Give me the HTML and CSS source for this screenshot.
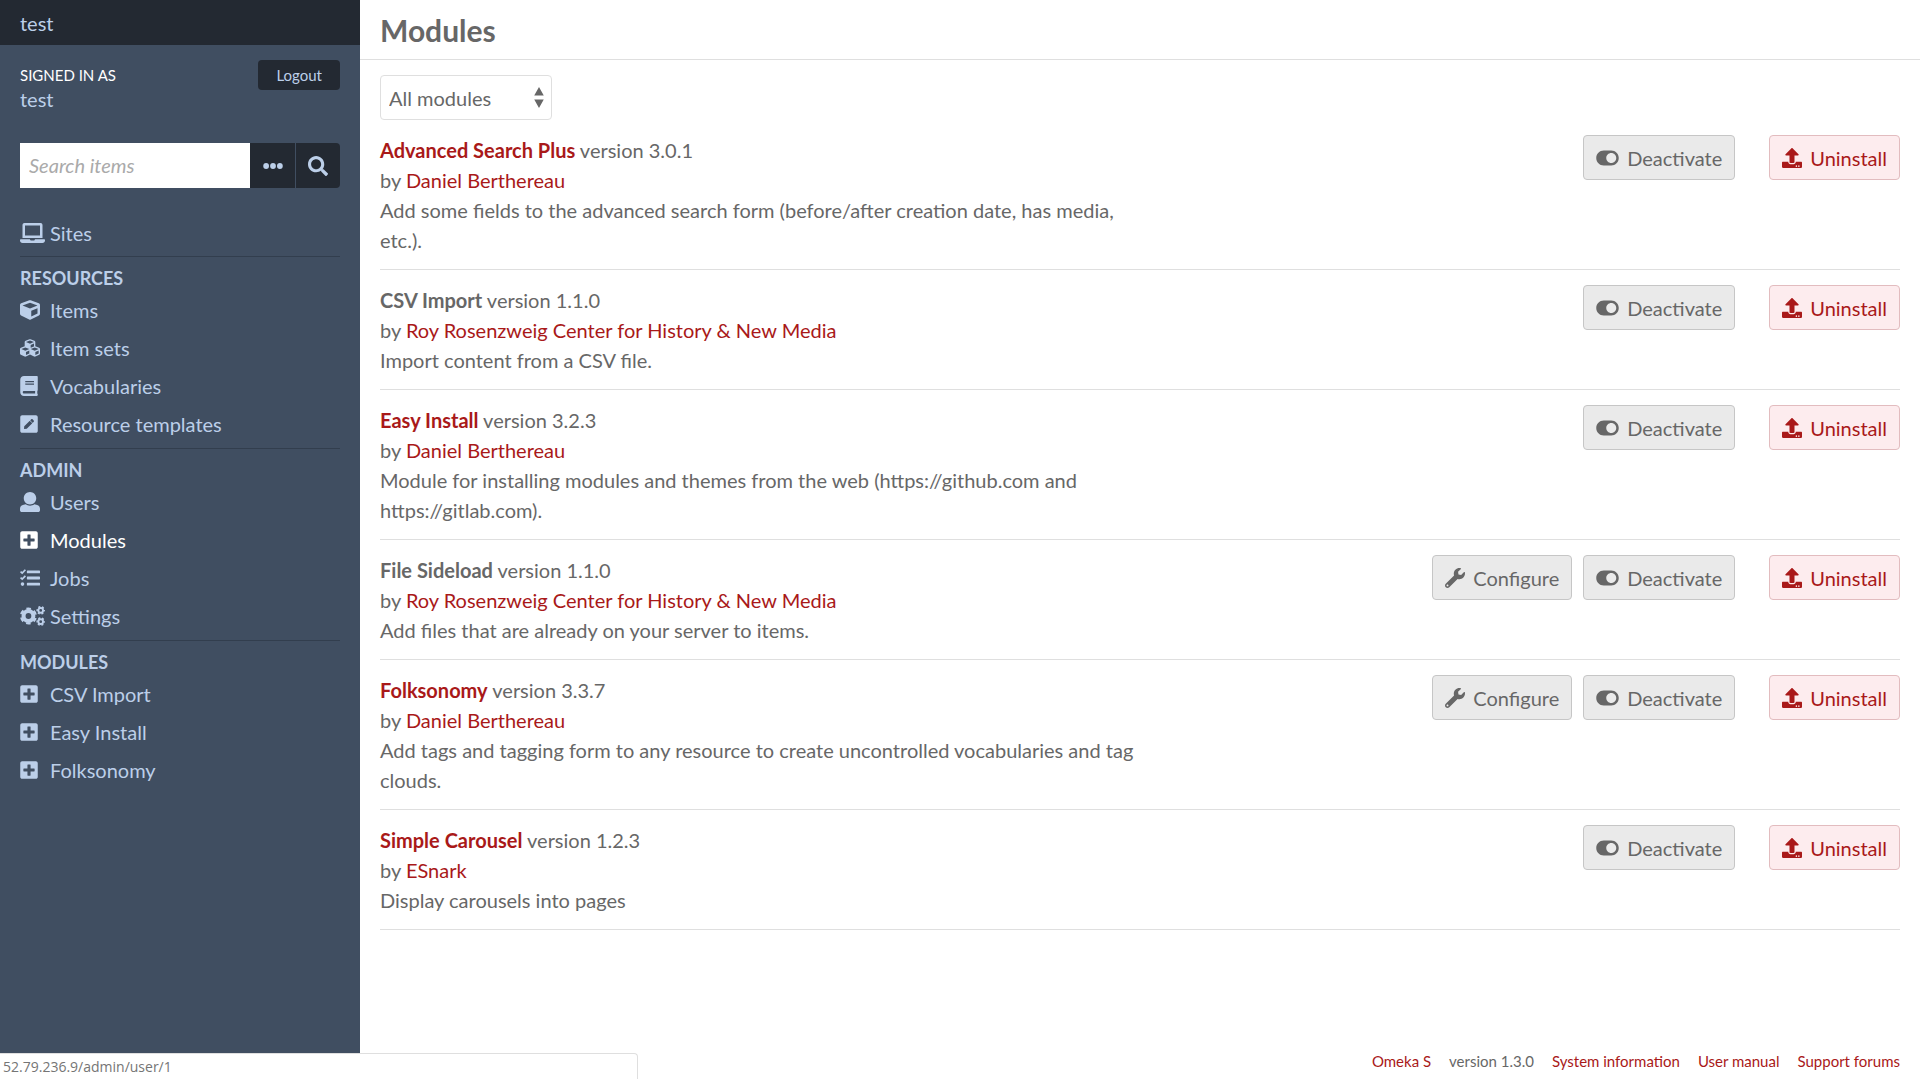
FILE: index.html
```html
<!DOCTYPE html>
<html lang="en">
<head>
<meta charset="utf-8">
<meta name="viewport" content="width=device-width, initial-scale=1">
<title>Modules · test</title>
<link rel="stylesheet" href="styles.css">
</head>
<body>
<svg class="sprite" aria-hidden="true">
  <symbol id="laptop" viewBox="0 0 640 512"><path d="M624 416H381.54c-.74 19.81-14.71 32-32.74 32H288c-18.69 0-33.02-17.47-32.77-32H16c-8.8 0-16 7.2-16 16v16c0 35.2 28.8 64 64 64h512c35.2 0 64-28.8 64-64v-16c0-8.8-7.2-16-16-16zM576 48c0-26.4-21.6-48-48-48H112C85.6 0 64 21.6 64 48v336h512V48zm-64 272H128V64h384v256z"/></symbol>
  <symbol id="cube" viewBox="0 0 512 512"><path d="M239.1 6.3l-208 78c-18.7 7-31.1 25-31.1 45v225.1c0 18.2 10.3 34.8 26.5 42.9l208 104c13.5 6.8 29.4 6.8 42.9 0l208-104c16.3-8.1 26.5-24.8 26.5-42.9V129.3c0-20-12.4-37.9-31.1-44.9l-208-78C262 2.2 250 2.2 239.1 6.3zM256 68.4l192 72v1.1l-192 78-192-78v-1.1l192-72zm32 356V275.5l160-65v133.9l-160 80z"/></symbol>
  <symbol id="cubes" viewBox="0 0 512 512"><path d="M488.6 250.2L392 214V105.5c0-15-9.3-28.4-23.4-33.7l-100-37.5c-8.1-3.1-17.1-3.1-25.3 0l-100 37.5c-14.1 5.3-23.4 18.7-23.4 33.7V214l-96.6 36.2C9.3 255.5 0 268.9 0 283.9V394c0 13.6 7.7 26.1 19.9 32.2l100 50c10.1 5.1 22.1 5.1 32.2 0l103.9-52 103.9 52c10.1 5.1 22.1 5.1 32.2 0l100-50c12.2-6.1 19.9-18.6 19.9-32.2V283.9c0-15-9.3-28.4-23.4-33.7zM358 214.8l-85 31.9v-68.2l85-37v73.3zM154 104.1l102-38.2 102 38.2v.6l-102 41.4-102-41.4v-.6zm84 291.1l-85 42.5v-79.1l85-38.8v75.4zm0-112l-102 41.4-102-41.4v-.6l102-38.2 102 38.2v.6zm240 112l-85 42.5v-79.1l85-38.8v75.4zm0-112l-102 41.4-102-41.4v-.6l102-38.2 102 38.2v.6z"/></symbol>
  <symbol id="book" viewBox="0 0 448 512"><path d="M448 360V24c0-13.3-10.7-24-24-24H96C43 0 0 43 0 96v320c0 53 43 96 96 96h328c13.3 0 24-10.7 24-24v-16c0-7.5-3.5-14.3-8.9-18.7-4.2-15.4-4.2-59.3 0-74.7 5.4-4.3 8.9-11.1 8.9-18.6zM128 134c0-3.3 2.7-6 6-6h212c3.3 0 6 2.7 6 6v20c0 3.3-2.7 6-6 6H134c-3.3 0-6-2.7-6-6v-20zm0 64c0-3.3 2.7-6 6-6h212c3.3 0 6 2.7 6 6v20c0 3.3-2.7 6-6 6H134c-3.3 0-6-2.7-6-6v-20zm253.4 250H96c-17.7 0-32-14.3-32-32 0-17.6 14.4-32 32-32h285.4c-1.9 17.1-1.9 46.9 0 64z"/></symbol>
  <symbol id="pen-square" viewBox="0 0 448 512"><path d="M400 480H48c-26.5 0-48-21.5-48-48V80c0-26.5 21.5-48 48-48h352c26.5 0 48 21.5 48 48v352c0 26.5-21.5 48-48 48zM238.1 177.9L102.4 313.6l-6.3 57.1c-.8 7.6 5.6 14.1 13.3 13.3l57.1-6.3L302.2 242c2.3-2.3 2.3-6.1 0-8.5L246.7 178c-2.5-2.4-6.3-2.4-8.6-.1zM345 165.1L314.9 135c-9.4-9.4-24.6-9.4-33.9 0l-23.1 23.1c-2.3 2.3-2.3 6.1 0 8.5l55.5 55.5c2.3 2.3 6.1 2.3 8.5 0L345 199c9.3-9.3 9.3-24.5 0-33.9z"/></symbol>
  <symbol id="user" viewBox="0 0 512 512"><path d="M256 0c88.366 0 160 71.634 160 160s-71.634 160-160 160S96 248.366 96 160 167.634 0 256 0zm183.283 333.821l-71.313-17.828c-74.923 53.89-165.738 41.864-223.94 0l-71.313 17.828C29.981 344.505 0 382.903 0 426.955V464c0 26.51 21.49 48 48 48h416c26.51 0 48-21.49 48-48v-37.045c0-44.052-29.981-82.45-72.717-93.134z"/></symbol>
  <symbol id="plus-square" viewBox="0 0 448 512"><path d="M400 32H48C21.5 32 0 53.5 0 80v352c0 26.5 21.5 48 48 48h352c26.5 0 48-21.5 48-48V80c0-26.5-21.5-48-48-48zm-32 252c0 6.6-5.4 12-12 12h-92v92c0 6.6-5.4 12-12 12h-56c-6.6 0-12-5.4-12-12v-92H92c-6.6 0-12-5.4-12-12v-56c0-6.6 5.4-12 12-12h92v-92c0-6.6 5.4-12 12-12h56c6.6 0 12 5.4 12 12v92h92c6.6 0 12 5.4 12 12v56z"/></symbol>
  <symbol id="tasks" viewBox="0 0 512 512"><path d="M192 64h304q16 0 16 16v40q0 16-16 16H192q-16 0-16-16V80q0-16 16-16zm0 156h304q16 0 16 16v40q0 16-16 16H192q-16 0-16-16v-40q0-16 16-16zm0 156h304q16 0 16 16v40q0 16-16 16H192q-16 0-16-16v-40q0-16 16-16z"/><circle cx="64" cy="412" r="46"/><path d="M14 92l42 38 82-86M14 248l42 38 82-86" fill="none" stroke="currentColor" stroke-width="44"/></symbol>
  <symbol id="cogs" viewBox="0 0 640 512"><g fill="none" stroke="currentColor"><circle cx="216" cy="256" r="126" stroke-width="104"/><circle cx="216" cy="256" r="190" stroke-width="56" stroke-dasharray="112 86.97" stroke-dashoffset="56" transform="rotate(30 216 256)"/><circle cx="530" cy="112" r="60" stroke-width="48"/><circle cx="530" cy="112" r="92" stroke-width="36" stroke-dasharray="52 44.34" stroke-dashoffset="26"/><circle cx="530" cy="400" r="60" stroke-width="48"/><circle cx="530" cy="400" r="92" stroke-width="36" stroke-dasharray="52 44.34" stroke-dashoffset="26"/></g></symbol>
  <symbol id="ellipsis" viewBox="0 0 512 512"><circle cx="80" cy="256" r="74"/><circle cx="256" cy="256" r="74"/><circle cx="432" cy="256" r="74"/></symbol>
  <symbol id="search" viewBox="0 0 512 512"><path d="M505 442.7L405.3 343c-4.5-4.5-10.6-7-17-7H372c27.6-35.3 44-79.7 44-128C416 93.1 322.9 0 208 0S0 93.1 0 208s93.1 208 208 208c48.3 0 92.7-16.4 128-44v16.3c0 6.4 2.5 12.5 7 17l99.7 99.7c9.4 9.4 24.6 9.4 33.9 0l28.3-28.3c9.4-9.4 9.4-24.6.1-34zM208 336c-70.7 0-128-57.2-128-128 0-70.7 57.2-128 128-128 70.7 0 128 57.2 128 128 0 70.7-57.2 128-128 128z"/></symbol>
  <symbol id="wrench" viewBox="0 0 512 512"><path d="M507.73 109.1c-2.24-9.03-13.54-12.09-20.12-5.51l-74.36 74.36-67.88-11.31-11.31-67.88 74.36-74.36c6.62-6.62 3.43-17.9-5.66-20.16-47.38-11.74-99.55.91-136.58 37.93-39.64 39.64-50.55 97.1-34.05 147.2L18.74 402.76c-24.99 24.99-24.99 65.51 0 90.5 24.99 24.99 65.51 24.99 90.5 0l213.21-213.21c50.12 16.71 107.47 5.68 147.37-34.22 37.07-37.07 49.7-89.32 37.91-136.73zM64 472c-13.25 0-24-10.75-24-24 0-13.26 10.75-24 24-24s24 10.74 24 24c0 13.25-10.75 24-24 24z"/></symbol>
  <symbol id="toggle" viewBox="0 0 576 512"><path d="M384 64H192C86 64 0 150 0 256s86 192 192 192h192c106 0 192-86 192-192S490 64 384 64zm0 320c-70.8 0-128-57.3-128-128 0-70.8 57.3-128 128-128 70.8 0 128 57.3 128 128 0 70.8-57.3 128-128 128z"/></symbol>
  <symbol id="upload" viewBox="0 0 512 512"><path d="M296 384h-80c-13.3 0-24-10.7-24-24V192h-87.7c-17.8 0-26.7-21.5-14.1-34.1L242.3 5.7c7.5-7.5 19.8-7.5 27.3 0l152.2 152.2c12.6 12.6 3.7 34.1-14.1 34.1H320v168c0 13.3-10.7 24-24 24zm216-8v112c0 13.3-10.7 24-24 24H24c-13.3 0-24-10.7-24-24V376c0-13.3 10.7-24 24-24h136v8c0 30.9 25.1 56 56 56h80c30.9 0 56-25.1 56-56v-8h136c13.3 0 24 10.7 24 24zm-124 88c0-11-9-20-20-20s-20 9-20 20 9 20 20 20 20-9 20-20zm64 0c0-11-9-20-20-20s-20 9-20 20 9 20 20 20 20-9 20-20z"/></symbol>
</svg>

<header class="sidebar">
  <div class="site-title"><a href="#">test</a></div>
  <div class="user">
    <div class="signed-in"><span class="user-label">Signed in as</span><a href="#">test</a></div>
    <button type="button" class="logout">Logout</button>
  </div>
  <form class="search" role="search">
    <input type="text" placeholder="Search items" aria-label="Search items">
    <button type="button" aria-label="Advanced options"><svg class="icon"><use href="#ellipsis"/></svg></button>
    <button type="button" aria-label="Search"><svg class="icon"><use href="#search"/></svg></button>
  </form>
  <nav>
    <ul class="group">
      <li><a href="#"><svg class="icon wide"><use href="#laptop"/></svg>Sites</a></li>
    </ul>
    <h4>Resources</h4>
    <ul class="group">
      <li><a href="#"><svg class="icon"><use href="#cube"/></svg>Items</a></li>
      <li><a href="#"><svg class="icon"><use href="#cubes"/></svg>Item sets</a></li>
      <li><a href="#"><svg class="icon narrow"><use href="#book"/></svg>Vocabularies</a></li>
      <li><a href="#"><svg class="icon narrow"><use href="#pen-square"/></svg>Resource templates</a></li>
    </ul>
    <h4>Admin</h4>
    <ul class="group">
      <li><a href="#"><svg class="icon"><use href="#user"/></svg>Users</a></li>
      <li><a href="#" class="active"><svg class="icon narrow"><use href="#plus-square"/></svg>Modules</a></li>
      <li><a href="#"><svg class="icon"><use href="#tasks"/></svg>Jobs</a></li>
      <li><a href="#"><svg class="icon wide"><use href="#cogs"/></svg>Settings</a></li>
    </ul>
    <h4>Modules</h4>
    <ul class="group">
      <li><a href="#"><svg class="icon narrow"><use href="#plus-square"/></svg>CSV Import</a></li>
      <li><a href="#"><svg class="icon narrow"><use href="#plus-square"/></svg>Easy Install</a></li>
      <li><a href="#"><svg class="icon narrow"><use href="#plus-square"/></svg>Folksonomy</a></li>
    </ul>
  </nav>
</header>

<div class="page">
  <div class="page-title"><h1>Modules</h1></div>
  <main>
    <div class="filter">
      <select aria-label="Filter modules"><option>All modules</option></select>
      <svg class="arrows" viewBox="0 0 10 22" aria-hidden="true"><path d="M5 0l5 9H0zM5 22l5-9H0z"/></svg>
    </div>

    <article class="module">
      <div class="meta">
        <div><a class="name" href="#">Advanced Search Plus</a> version 3.0.1</div>
        <div>by <a href="#">Daniel Berthereau</a></div>
        <p>Add some fields to the advanced search form (before/after creation date, has media, etc.).</p>
      </div>
      <div class="actions">
        <button type="button"><svg class="icon toggle"><use href="#toggle"/></svg>Deactivate</button>
        <button type="button" class="danger"><svg class="icon"><use href="#upload"/></svg>Uninstall</button>
      </div>
    </article>

    <article class="module">
      <div class="meta">
        <div><span class="name">CSV Import</span> version 1.1.0</div>
        <div>by <a href="#">Roy Rosenzweig Center for History &amp; New Media</a></div>
        <p>Import content from a CSV file.</p>
      </div>
      <div class="actions">
        <button type="button"><svg class="icon toggle"><use href="#toggle"/></svg>Deactivate</button>
        <button type="button" class="danger"><svg class="icon"><use href="#upload"/></svg>Uninstall</button>
      </div>
    </article>

    <article class="module">
      <div class="meta">
        <div><a class="name" href="#">Easy Install</a> version 3.2.3</div>
        <div>by <a href="#">Daniel Berthereau</a></div>
        <p>Module for installing modules and themes from the web (https://github.com and https://gitlab.com).</p>
      </div>
      <div class="actions">
        <button type="button"><svg class="icon toggle"><use href="#toggle"/></svg>Deactivate</button>
        <button type="button" class="danger"><svg class="icon"><use href="#upload"/></svg>Uninstall</button>
      </div>
    </article>

    <article class="module">
      <div class="meta">
        <div><span class="name">File Sideload</span> version 1.1.0</div>
        <div>by <a href="#">Roy Rosenzweig Center for History &amp; New Media</a></div>
        <p>Add files that are already on your server to items.</p>
      </div>
      <div class="actions">
        <button type="button"><svg class="icon"><use href="#wrench"/></svg>Configure</button>
        <button type="button"><svg class="icon toggle"><use href="#toggle"/></svg>Deactivate</button>
        <button type="button" class="danger"><svg class="icon"><use href="#upload"/></svg>Uninstall</button>
      </div>
    </article>

    <article class="module">
      <div class="meta">
        <div><a class="name" href="#">Folksonomy</a> version 3.3.7</div>
        <div>by <a href="#">Daniel Berthereau</a></div>
        <p>Add tags and tagging form to any resource to create uncontrolled vocabularies and tag clouds.</p>
      </div>
      <div class="actions">
        <button type="button"><svg class="icon"><use href="#wrench"/></svg>Configure</button>
        <button type="button"><svg class="icon toggle"><use href="#toggle"/></svg>Deactivate</button>
        <button type="button" class="danger"><svg class="icon"><use href="#upload"/></svg>Uninstall</button>
      </div>
    </article>

    <article class="module">
      <div class="meta">
        <div><a class="name" href="#">Simple Carousel</a> version 1.2.3</div>
        <div>by <a href="#">ESnark</a></div>
        <p>Display carousels into pages</p>
      </div>
      <div class="actions">
        <button type="button"><svg class="icon toggle"><use href="#toggle"/></svg>Deactivate</button>
        <button type="button" class="danger"><svg class="icon"><use href="#upload"/></svg>Uninstall</button>
      </div>
    </article>
  </main>
  <footer>
    <a href="#">Omeka S</a>
    <span>version 1.3.0</span>
    <a href="#">System information</a>
    <a href="#">User manual</a>
    <a href="#">Support forums</a>
  </footer>
</div>

<div class="status">52.79.236.9/admin/user/1</div>
</body>
</html>
```
FILE: styles.css
```css
* {
  box-sizing: border-box;
}

body {
  margin: 0;
  min-height: 100vh;
  display: flex;
  font: 20px/30px Lato, sans-serif;
  color: #676767;
  background: #fff;
}

h1, h4, p, ul {
  margin: 0;
  padding: 0;
}

ul {
  list-style: none;
}

a {
  color: #a91919;
  text-decoration: none;
}

button, input, select {
  font: inherit;
  color: inherit;
  margin: 0;
}

button {
  cursor: pointer;
}

.sprite {
  position: absolute;
  width: 0;
  height: 0;
}

.icon {
  flex: none;
  width: 20px;
  height: 20px;
  fill: currentColor;
}

.icon.wide {
  width: 25px;
}

.icon.narrow {
  width: 18px;
}

.icon.toggle {
  width: 23px;
}

/* Sidebar */

.sidebar {
  flex: none;
  width: 18.75%;
  min-width: 300px;
  background: #404e61;
  color: #bccfe9;
}

.sidebar a {
  color: inherit;
}

.site-title {
  padding: 8px 20px 7px;
  background: #232932;
}

.user {
  display: flex;
  justify-content: space-between;
  align-items: flex-start;
  padding: 15px 20px 0;
}

.signed-in {
  display: flex;
  flex-direction: column;
  padding-top: 3px;
  line-height: 24px;
}

.user-label {
  font-size: 15px;
  color: #fff;
  text-transform: uppercase;
}

.logout {
  height: 30px;
  padding: 0 18px;
  border: 0;
  border-radius: 4px;
  background: #232932;
  font-size: 15px;
}

.search {
  display: flex;
  height: 45px;
  margin: 32px 20px 26px;
}

.search input {
  flex: 1;
  min-width: 0;
  padding: 0 9px 2px;
  border: 0;
  border-radius: 0;
  background: #fff;
  color: #676767;
}

.search input::placeholder {
  color: #aaa;
  font-style: italic;
  opacity: 1;
}

.search button {
  display: flex;
  align-items: center;
  justify-content: center;
  width: 45px;
  padding: 0;
  border: 0;
  background: #232932;
}

.search button:last-child {
  border-left: 1px solid #404e61;
  border-radius: 0 4px 4px 0;
}

nav {
  margin: 0 20px;
}

.group {
  padding-bottom: 5px;
}

.group:first-child {
  padding-bottom: 4px;
}

.group a {
  display: flex;
  align-items: center;
  line-height: 38px;
}

.group .icon {
  margin-right: 10px;
}

.group .wide {
  margin-right: 5px;
}

.group .narrow {
  margin-right: 12px;
}

.sidebar .active {
  color: #fff;
}

nav h4 {
  padding-top: 8px;
  border-top: 1px solid #323e4e;
  font-size: 18px;
  line-height: 26px;
  text-transform: uppercase;
}

/* Page */

.page {
  flex: 1;
  min-width: 0;
  display: flex;
  flex-direction: column;
}

.page-title {
  padding: 8px 20px 6px;
  border-bottom: 1px solid #dfdfdf;
}

h1 {
  font-size: 30px;
  line-height: 45px;
}

main {
  padding: 15px 20px 0;
}

.filter {
  position: relative;
  width: 172px;
}

.filter select {
  display: block;
  width: 100%;
  height: 45px;
  padding: 1px 8px 0;
  border: 1px solid #dfdfdf;
  border-radius: 4px;
  background: #fff;
  appearance: none;
}

.arrows {
  position: absolute;
  right: 8px;
  top: 12px;
  width: 10px;
  height: 21px;
  fill: #676767;
  pointer-events: none;
}

.module {
  display: flex;
  justify-content: space-between;
  align-items: flex-start;
  padding: 15px 0 14px;
  border-bottom: 1px solid #dfdfdf;
}

.meta {
  width: 50%;
}

.name {
  font-weight: bold;
}

.actions {
  display: flex;
  gap: 11px;
}

.actions button {
  display: flex;
  align-items: center;
  gap: 8px;
  height: 45px;
  padding: 0 12px;
  border: 1px solid #c6c6c6;
  border-radius: 4px;
  background: #eaeaea;
}

.actions .danger {
  margin-left: 23px;
  border-color: #e2bcbf;
  background: #fdecee;
  color: #a91919;
}

footer {
  display: flex;
  justify-content: flex-end;
  gap: 18px;
  margin-top: auto;
  padding: 0 20px 3px;
  font-size: 15px;
}

/* Link preview shown over the bottom corner of the window */

.status {
  position: fixed;
  left: 0;
  bottom: 0;
  width: 638px;
  height: 26px;
  padding: 0 3px;
  border: solid #dfdfdf;
  border-width: 1px 1px 0 0;
  border-radius: 0 4px 0 0;
  background: #fff;
  color: #757575;
  font: 14px/25px "Open Sans", sans-serif;
}
```
